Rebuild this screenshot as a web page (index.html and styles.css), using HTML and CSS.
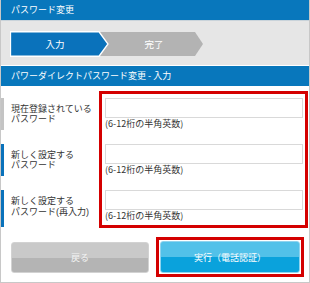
FILE: index.html
```html
<!DOCTYPE html>
<html lang="ja">
<head>
<meta charset="utf-8">
<title>パスワード変更</title>
<link rel="stylesheet" href="styles.css">
</head>
<body>
<div class="panel">
  <div class="header">パスワード変更</div>
  <div class="steps">
    <svg class="steps-svg" width="200" height="26" viewBox="0 0 200 26">
      <polygon points="90,1 185,1 193,13 185,25 90,25" fill="#b3b3b3"/>
      <polygon points="0.5,0.75 89,0.75 98,13 89,25.25 0.5,25.25" fill="#0a72bb" stroke="#ffffff" stroke-width="1.3"/>
      <text class="step-text" x="45" y="16.5" text-anchor="middle">入力</text>
      <text class="step-text" x="144" y="16.5" text-anchor="middle">完了</text>
    </svg>
  </div>
  <div class="subheader">パワーダイレクトパスワード変更 - 入力</div>
  <div class="form">
    <div class="labels">
      <div class="label label-current"><span class="label-line">現在登録されている</span><span class="label-line">パスワード</span></div>
      <div class="label"><span class="label-line">新しく設定する</span><span class="label-line">パスワード</span></div>
      <div class="label label-last"><span class="label-line">新しく設定する</span><span class="label-line">パスワード(再入力)</span></div>
    </div>
    <div class="fields">
      <div class="field">
        <input class="input" type="password">
        <div class="hint">(6-12桁の半角英数)</div>
      </div>
      <div class="field">
        <input class="input" type="password">
        <div class="hint">(6-12桁の半角英数)</div>
      </div>
      <div class="field field-last">
        <input class="input" type="password">
        <div class="hint">(6-12桁の半角英数)</div>
      </div>
    </div>
  </div>
  <div class="actions">
    <button class="btn btn-back" type="button">戻る</button>
    <div class="submit-frame">
      <button class="btn btn-submit" type="button">実行（電話認証）</button>
    </div>
  </div>
</div>
</body>
</html>
```

FILE: styles.css
```css
html, body {
  margin: 0;
  padding: 0;
  background: #ffffff;
}

body {
  font-family: "Noto Sans CJK JP", "Noto Sans", sans-serif;
  font-size: 9px;
  color: #333333;
}

.panel {
  width: 310px;
  height: 283px;
  box-sizing: border-box;
  border: 1px solid #c8c8c8;
  border-top: none;
  display: flex;
  flex-direction: column;
}

.header {
  height: 20px;
  line-height: 20px;
  background: #0877bc;
  color: #ffffff;
  padding-left: 10px;
  border-bottom: 1px solid #c9d3da;
  font-size: 9px;
}

.steps {
  height: 44px;
  box-sizing: border-box;
  background: #e6e6e6;
  padding: 10px 0 0 9px;
  margin-bottom: 1px;
}

.steps-svg {
  display: block;
}

.step-text {
  font-family: "Noto Sans CJK JP", "Noto Sans", sans-serif;
  font-size: 9.5px;
  fill: #ffffff;
}

.subheader {
  height: 20px;
  line-height: 20px;
  background: #0877bc;
  color: #ffffff;
  padding-left: 10px;
  font-size: 9px;
}

.form {
  display: flex;
  align-items: flex-start;
  padding-top: 5px;
}

.labels {
  width: 98px;
  padding-top: 7px;
}

.label {
  height: 32px;
  box-sizing: border-box;
  border-left: 3px solid #0a72bb;
  padding-left: 7px;
  margin-bottom: 14px;
  display: flex;
  flex-direction: column;
  justify-content: center;
  font-family: "Liberation Sans", "Noto Sans CJK JP", sans-serif;
  font-size: 9px;
  color: #333333;
}

.label-line {
  display: block;
  height: 10.5px;
  line-height: 10.5px;
  white-space: nowrap;
}

.label-current {
  border-left-color: #c4c4c4;
}

.label-last {
  height: 37px;
  justify-content: flex-start;
  padding-top: 6px;
  margin-bottom: 0;
}

.fields {
  width: 209px;
  box-sizing: border-box;
  border: 3px solid #d40000;
  padding: 4px 2px 3px 3px;
}

.field {
  margin-bottom: 14px;
}

.field-last {
  margin-bottom: 0;
}

.input {
  display: block;
  width: 198px;
  height: 20px;
  box-sizing: border-box;
  margin: 0;
  border: 1px solid #d9d9d9;
  background: #ffffff;
  outline: none;
  padding: 0 4px;
}

.hint {
  height: 12px;
  line-height: 11px;
  font-size: 9px;
  color: #333333;
  white-space: nowrap;
}

.actions {
  display: flex;
  align-items: center;
  padding: 9px 0 5px 10px;
}

.btn {
  font-family: "Noto Sans CJK JP", "Noto Sans", sans-serif;
  font-size: 9px;
  color: #ffffff;
  border-radius: 3px;
  padding: 0;
  margin: 0;
  cursor: pointer;
}

.btn-back {
  width: 138px;
  height: 31px;
  border: 1px solid #d2d2d2;
  background: linear-gradient(to bottom, #c9c9c9 0%, #c9c9c9 50%, #b4b4b4 50%, #b4b4b4 100%);
  color: #f4f4f4;
}

.submit-frame {
  margin-left: 7px;
  width: 148px;
  height: 40px;
  box-sizing: border-box;
  border: 3px solid #d40000;
  padding: 1px;
}

.btn-submit {
  display: block;
  width: 140px;
  height: 32px;
  border: 1px solid #8fd3ee;
  background: linear-gradient(to bottom, #52c1e9 0%, #52c1e9 50%, #0aa2dc 50%, #0aa2dc 100%);
}
```
